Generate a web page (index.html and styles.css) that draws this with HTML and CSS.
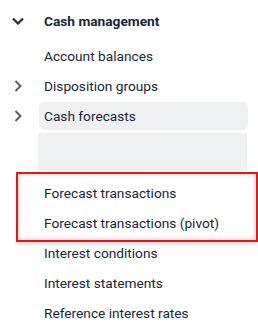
FILE: index.html
```html
<!DOCTYPE html>
<html>
<head>
<meta charset="utf-8">
<link rel="stylesheet" href="styles.css">
</head>
<body>
<nav class="menu">
  <div class="row header">
    <span class="tw">
      <svg width="12" height="8" viewBox="0 0 12 8"><polyline points="1,1.5 6,6.5 11,1.5" fill="none" stroke="#1c2b3a" stroke-width="2.2"/></svg>
    </span>
    <span class="label">Cash management</span>
  </div>
  <ul class="items">
    <li class="row"><span class="tw"></span><span class="label">Account balances</span></li>
    <li class="row"><span class="tw">
      <svg width="8" height="12" viewBox="0 0 8 12"><polyline points="1.5,1 6.5,6 1.5,11" fill="none" stroke="#5b5f66" stroke-width="2"/></svg>
    </span><span class="label">Disposition groups</span></li>
    <li class="row"><span class="tw">
      <svg width="8" height="12" viewBox="0 0 8 12"><polyline points="1.5,1 6.5,6 1.5,11" fill="none" stroke="#5b5f66" stroke-width="2"/></svg>
    </span><span class="label selected">Cash forecasts</span></li>
    <li class="placeholder"></li>
    <li class="highlight">
      <ul class="items">
        <li class="row"><span class="label">Forecast transactions</span></li>
        <li class="row"><span class="label">Forecast transactions (pivot)</span></li>
      </ul>
    </li>
    <li class="row"><span class="tw"></span><span class="label">Interest conditions</span></li>
    <li class="row"><span class="tw"></span><span class="label">Interest statements</span></li>
    <li class="row"><span class="tw"></span><span class="label">Reference interest rates</span></li>
  </ul>
</nav>
</body>
</html>
```
FILE: styles.css
```css
html, body {
  margin: 0;
  padding: 0;
  background: #ffffff;
}
body {
  width: 258px;
  height: 329px;
  overflow: hidden;
  font-family: Roboto, "Liberation Sans", sans-serif;
  font-size: 13.7px;
  color: #17263a;
}
.menu {
  padding-top: 6px;
}
.items {
  list-style: none;
  margin: 0;
  padding: 0;
}
.row {
  display: flex;
  align-items: center;
  height: 30px;
}
.header {
  margin-bottom: 5px;
  font-weight: 700;
}
.tw {
  width: 36px;
  flex: none;
  display: flex;
  justify-content: center;
  align-items: center;
}
.label {
  flex: 1;
  margin-left: 3px;
  margin-right: 10px;
  padding-left: 5px;
  white-space: nowrap;
}
.label.selected {
  height: 28px;
  display: flex;
  align-items: center;
  background: #eff0f2;
  border-radius: 5px;
}
.placeholder {
  margin: 2px 0 0 38px;
  width: 209px;
  height: 38px;
  background: #eff0f2;
}
.highlight {
  margin: 1px 0 -4px 16px;
  padding: 4px 0 2px 0;
  border: 2px solid #e5161b;
  background: #ffffff;
  box-shadow: inset 0 0 5px rgba(0, 0, 0, 0.25), 0 3px 4px rgba(0, 0, 0, 0.12);
  position: relative;
}
.highlight .label {
  margin-left: 0;
  padding-left: 26px;
}
```
